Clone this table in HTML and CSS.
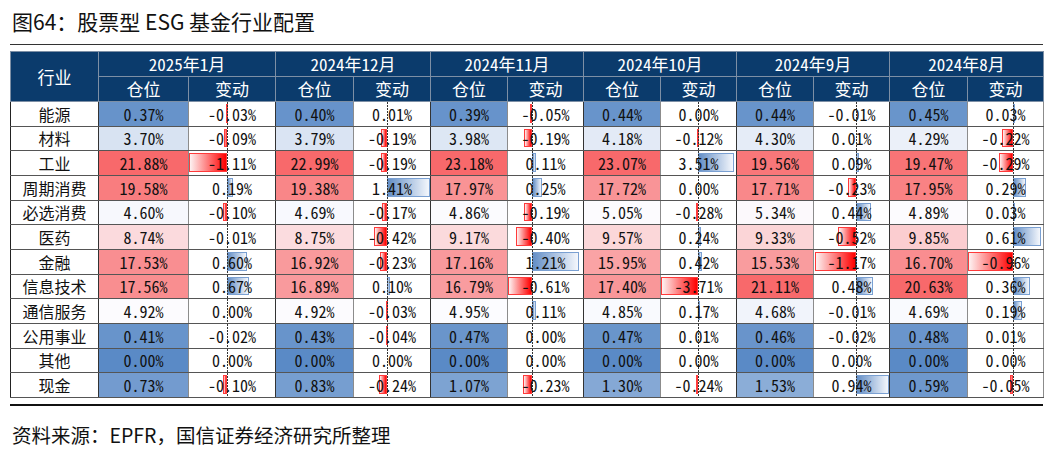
FILE: index.html
```html
<!DOCTYPE html>
<html lang="zh-CN">
<head>
<meta charset="utf-8">
<title>股票型 ESG 基金行业配置</title>
<link rel="stylesheet" href="styles.css">
</head>
<body>
<div class="page">
  <h1 class="title">图64：股票型 ESG 基金行业配置</h1>
  <div class="rule-top"></div>
  <table class="data">
    <colgroup>
      <col class="w-lab">
      <col class="w-p1"><col class="w-c1">
      <col class="w-78"><col class="w-77">
      <col class="w-77"><col class="w-76">
      <col class="w-77"><col class="w-76">
      <col class="w-77"><col class="w-76">
      <col class="w-78"><col class="w-76">
    </colgroup>
    <thead>
      <tr>
        <th rowspan="2" class="h-lab">行业</th>
        <th colspan="2">2025年1月</th>
        <th colspan="2">2024年12月</th>
        <th colspan="2">2024年11月</th>
        <th colspan="2">2024年10月</th>
        <th colspan="2">2024年9月</th>
        <th colspan="2">2024年8月</th>
      </tr>
      <tr>
        <th>仓位</th><th>变动</th>
        <th>仓位</th><th>变动</th>
        <th>仓位</th><th>变动</th>
        <th>仓位</th><th>变动</th>
        <th>仓位</th><th>变动</th>
        <th>仓位</th><th>变动</th>
      </tr>
    </thead>
    <tbody>
      <tr>
        <td class="lab">能源</td>
        <td class="p">0.37%</td><td class="c"><span>-0.03%</span></td>
        <td class="p">0.40%</td><td class="c"><span>0.01%</span></td>
        <td class="p">0.39%</td><td class="c"><span>-0.05%</span></td>
        <td class="p">0.44%</td><td class="c"><span>0.00%</span></td>
        <td class="p">0.44%</td><td class="c"><span>-0.01%</span></td>
        <td class="p">0.45%</td><td class="c"><span>0.03%</span></td>
      </tr>
      <tr>
        <td class="lab">材料</td>
        <td class="p">3.70%</td><td class="c"><span>-0.09%</span></td>
        <td class="p">3.79%</td><td class="c"><span>-0.19%</span></td>
        <td class="p">3.98%</td><td class="c"><span>-0.19%</span></td>
        <td class="p">4.18%</td><td class="c"><span>-0.12%</span></td>
        <td class="p">4.30%</td><td class="c"><span>0.01%</span></td>
        <td class="p">4.29%</td><td class="c"><span>-0.22%</span></td>
      </tr>
      <tr>
        <td class="lab">工业</td>
        <td class="p">21.88%</td><td class="c"><span>-1.11%</span></td>
        <td class="p">22.99%</td><td class="c"><span>-0.19%</span></td>
        <td class="p">23.18%</td><td class="c"><span>0.11%</span></td>
        <td class="p">23.07%</td><td class="c"><span>3.51%</span></td>
        <td class="p">19.56%</td><td class="c"><span>0.09%</span></td>
        <td class="p">19.47%</td><td class="c"><span>-0.29%</span></td>
      </tr>
      <tr>
        <td class="lab">周期消费</td>
        <td class="p">19.58%</td><td class="c"><span>0.19%</span></td>
        <td class="p">19.38%</td><td class="c"><span>1.41%</span></td>
        <td class="p">17.97%</td><td class="c"><span>0.25%</span></td>
        <td class="p">17.72%</td><td class="c"><span>0.00%</span></td>
        <td class="p">17.71%</td><td class="c"><span>-0.23%</span></td>
        <td class="p">17.95%</td><td class="c"><span>0.29%</span></td>
      </tr>
      <tr>
        <td class="lab">必选消费</td>
        <td class="p">4.60%</td><td class="c"><span>-0.10%</span></td>
        <td class="p">4.69%</td><td class="c"><span>-0.17%</span></td>
        <td class="p">4.86%</td><td class="c"><span>-0.19%</span></td>
        <td class="p">5.05%</td><td class="c"><span>-0.28%</span></td>
        <td class="p">5.34%</td><td class="c"><span>0.44%</span></td>
        <td class="p">4.89%</td><td class="c"><span>0.03%</span></td>
      </tr>
      <tr>
        <td class="lab">医药</td>
        <td class="p">8.74%</td><td class="c"><span>-0.01%</span></td>
        <td class="p">8.75%</td><td class="c"><span>-0.42%</span></td>
        <td class="p">9.17%</td><td class="c"><span>-0.40%</span></td>
        <td class="p">9.57%</td><td class="c"><span>0.24%</span></td>
        <td class="p">9.33%</td><td class="c"><span>-0.52%</span></td>
        <td class="p">9.85%</td><td class="c"><span>0.61%</span></td>
      </tr>
      <tr>
        <td class="lab">金融</td>
        <td class="p">17.53%</td><td class="c"><span>0.60%</span></td>
        <td class="p">16.92%</td><td class="c"><span>-0.23%</span></td>
        <td class="p">17.16%</td><td class="c"><span>1.21%</span></td>
        <td class="p">15.95%</td><td class="c"><span>0.42%</span></td>
        <td class="p">15.53%</td><td class="c"><span>-1.17%</span></td>
        <td class="p">16.70%</td><td class="c"><span>-0.96%</span></td>
      </tr>
      <tr>
        <td class="lab">信息技术</td>
        <td class="p">17.56%</td><td class="c"><span>0.67%</span></td>
        <td class="p">16.89%</td><td class="c"><span>0.10%</span></td>
        <td class="p">16.79%</td><td class="c"><span>-0.61%</span></td>
        <td class="p">17.40%</td><td class="c"><span>-3.71%</span></td>
        <td class="p">21.11%</td><td class="c"><span>0.48%</span></td>
        <td class="p">20.63%</td><td class="c"><span>0.36%</span></td>
      </tr>
      <tr>
        <td class="lab">通信服务</td>
        <td class="p">4.92%</td><td class="c"><span>0.00%</span></td>
        <td class="p">4.92%</td><td class="c"><span>-0.03%</span></td>
        <td class="p">4.95%</td><td class="c"><span>0.11%</span></td>
        <td class="p">4.85%</td><td class="c"><span>0.17%</span></td>
        <td class="p">4.68%</td><td class="c"><span>-0.01%</span></td>
        <td class="p">4.69%</td><td class="c"><span>0.19%</span></td>
      </tr>
      <tr>
        <td class="lab">公用事业</td>
        <td class="p">0.41%</td><td class="c"><span>-0.02%</span></td>
        <td class="p">0.43%</td><td class="c"><span>-0.04%</span></td>
        <td class="p">0.47%</td><td class="c"><span>0.00%</span></td>
        <td class="p">0.47%</td><td class="c"><span>0.01%</span></td>
        <td class="p">0.46%</td><td class="c"><span>-0.02%</span></td>
        <td class="p">0.48%</td><td class="c"><span>0.01%</span></td>
      </tr>
      <tr>
        <td class="lab">其他</td>
        <td class="p">0.00%</td><td class="c"><span>0.00%</span></td>
        <td class="p">0.00%</td><td class="c"><span>0.00%</span></td>
        <td class="p">0.00%</td><td class="c"><span>0.00%</span></td>
        <td class="p">0.00%</td><td class="c"><span>0.00%</span></td>
        <td class="p">0.00%</td><td class="c"><span>0.00%</span></td>
        <td class="p">0.00%</td><td class="c"><span>0.00%</span></td>
      </tr>
      <tr>
        <td class="lab">现金</td>
        <td class="p">0.73%</td><td class="c"><span>-0.10%</span></td>
        <td class="p">0.83%</td><td class="c"><span>-0.24%</span></td>
        <td class="p">1.07%</td><td class="c"><span>-0.23%</span></td>
        <td class="p">1.30%</td><td class="c"><span>-0.24%</span></td>
        <td class="p">1.53%</td><td class="c"><span>0.94%</span></td>
        <td class="p">0.59%</td><td class="c"><span>-0.05%</span></td>
      </tr>
    </tbody>
  </table>
  <div class="rule-bottom"></div>
  <p class="source">资料来源：EPFR，国信证券经济研究所整理</p>
</div>
<script src="script.js"></script>
</body>
</html>
```

FILE: styles.css
```css
* { box-sizing: border-box; }
body {
  margin: 0;
  background: #fff;
  color: #111;
  font-family: "Noto Sans CJK SC", "Noto Sans", sans-serif;
}
.page {
  width: 1043px;
  padding: 7px 0 0 10px;
}
.title {
  margin: 0;
  padding-left: 2px;
  font-size: 21px;
  line-height: 28px;
  font-weight: 400;
  color: #111;
}
.rule-top {
  margin-top: 9px;
  border-top: 1px solid #333;
}
.data {
  margin-top: 6px;
  width: 1033px;
  table-layout: fixed;
  border-collapse: collapse;
  font-size: 16px;
  font-feature-settings: "hwid" 1;
}
.w-lab { width: 88px; }
.w-p1 { width: 90px; }
.w-c1 { width: 87px; }
.w-78 { width: 78px; }
.w-77 { width: 77px; }
.w-76 { width: 76px; }

thead tr { height: 25px; }
th {
  padding: 0;
  background: #0b3b6c;
  color: #fff;
  font-size: 17px;
  font-weight: 400;
  text-align: center;
  line-height: 22px;
  border: 1px solid #7d8fa5;
}
tbody tr { height: 24.667px; }
td {
  padding: 0;
  text-align: center;
  line-height: 22px;
  white-space: nowrap;
  font-size: 16px;
  border-bottom: 1px solid #555;
  border-left: 1px solid #8c8c8c;
}
td.lab { border-left: 1px solid #222; }
td.p { border-left: 1px solid #333; }
td.c { position: relative; }
td:last-child { border-right: 1px solid #8c8c8c; }
td.c span { position: relative; z-index: 2; }

.axis {
  position: absolute;
  top: 0;
  bottom: 0;
  width: 1px;
  z-index: 1;
  background: repeating-linear-gradient(to bottom, #333 0 2px, transparent 2px 3px);
}
.bar {
  position: absolute;
  top: 2px;
  bottom: 3px;
  z-index: 0;
}
.bar.pos {
  background: linear-gradient(to right, #638ec6, #f4f7fc);
  border: 1px solid #7aa0d2;
}
.bar.neg {
  background: linear-gradient(to right, #fdf2f2, #ff0000);
  border: 1px solid #ff3a3a;
}

.rule-bottom {
  margin-top: 6px;
  width: 1033px;
  border-top: 2px solid #111;
}
.source {
  margin: 16px 0 0 2px;
  font-size: 19.5px;
  line-height: 26px;
  color: #111;
}
```

FILE: script.js
```js
(function () {
  var cfg = [
    { axis: 37.7, scale: 33.7 },
    { axis: 32.7, scale: 30.5 },
    { axis: 23.7, scale: 39.5 },
    { axis: 37.3, scale: 10.1 },
    { axis: 42.0, scale: 35.0 },
    { axis: 44.7, scale: 47.0 }
  ];
  var BLUE = [0x5a, 0x8a, 0xc6], WHITE = [0xfc, 0xfc, 0xff], RED = [0xf8, 0x69, 0x6b];
  function mix(a, b, t) {
    t = Math.max(0, Math.min(1, t));
    return a.map(function (x, i) { return Math.round(x + (b[i] - x) * t); });
  }
  var rows = Array.prototype.slice.call(document.querySelectorAll('.data tbody tr'));
  for (var k = 0; k < 6; k++) {
    var pcells = rows.map(function (r) { return r.children[1 + 2 * k]; });
    var ccells = rows.map(function (r) { return r.children[2 + 2 * k]; });
    var vals = pcells.map(function (c) { return parseFloat(c.textContent); });
    var s = vals.slice().sort(function (a, b) { return a - b; });
    var min = s[0], max = s[s.length - 1];
    var pos = (s.length - 1) * 0.5, lo = Math.floor(pos), hi = Math.ceil(pos);
    var med = s[lo] + (s[hi] - s[lo]) * (pos - lo);
    pcells.forEach(function (c, i) {
      var v = vals[i], col;
      if (v <= med) col = mix(BLUE, WHITE, (v - min) / (med - min));
      else col = mix(WHITE, RED, (v - med) / (max - med));
      c.style.backgroundColor = 'rgb(' + col.join(',') + ')';
    });
    var conf = cfg[k];
    ccells.forEach(function (c) {
      var v = parseFloat(c.textContent);
      var w = Math.abs(v) * conf.scale;
      if (w >= 0.8) {
        var b = document.createElement('i');
        b.className = v < 0 ? 'bar neg' : 'bar pos';
        w = Math.max(w, 1);
        b.style.width = w.toFixed(1) + 'px';
        b.style.left = (v < 0 ? conf.axis - w : conf.axis).toFixed(1) + 'px';
        c.insertBefore(b, c.firstChild);
      }
      var ax = document.createElement('i');
      ax.className = 'axis';
      ax.style.left = conf.axis + 'px';
      c.insertBefore(ax, c.firstChild);
    });
  }
})();
```
